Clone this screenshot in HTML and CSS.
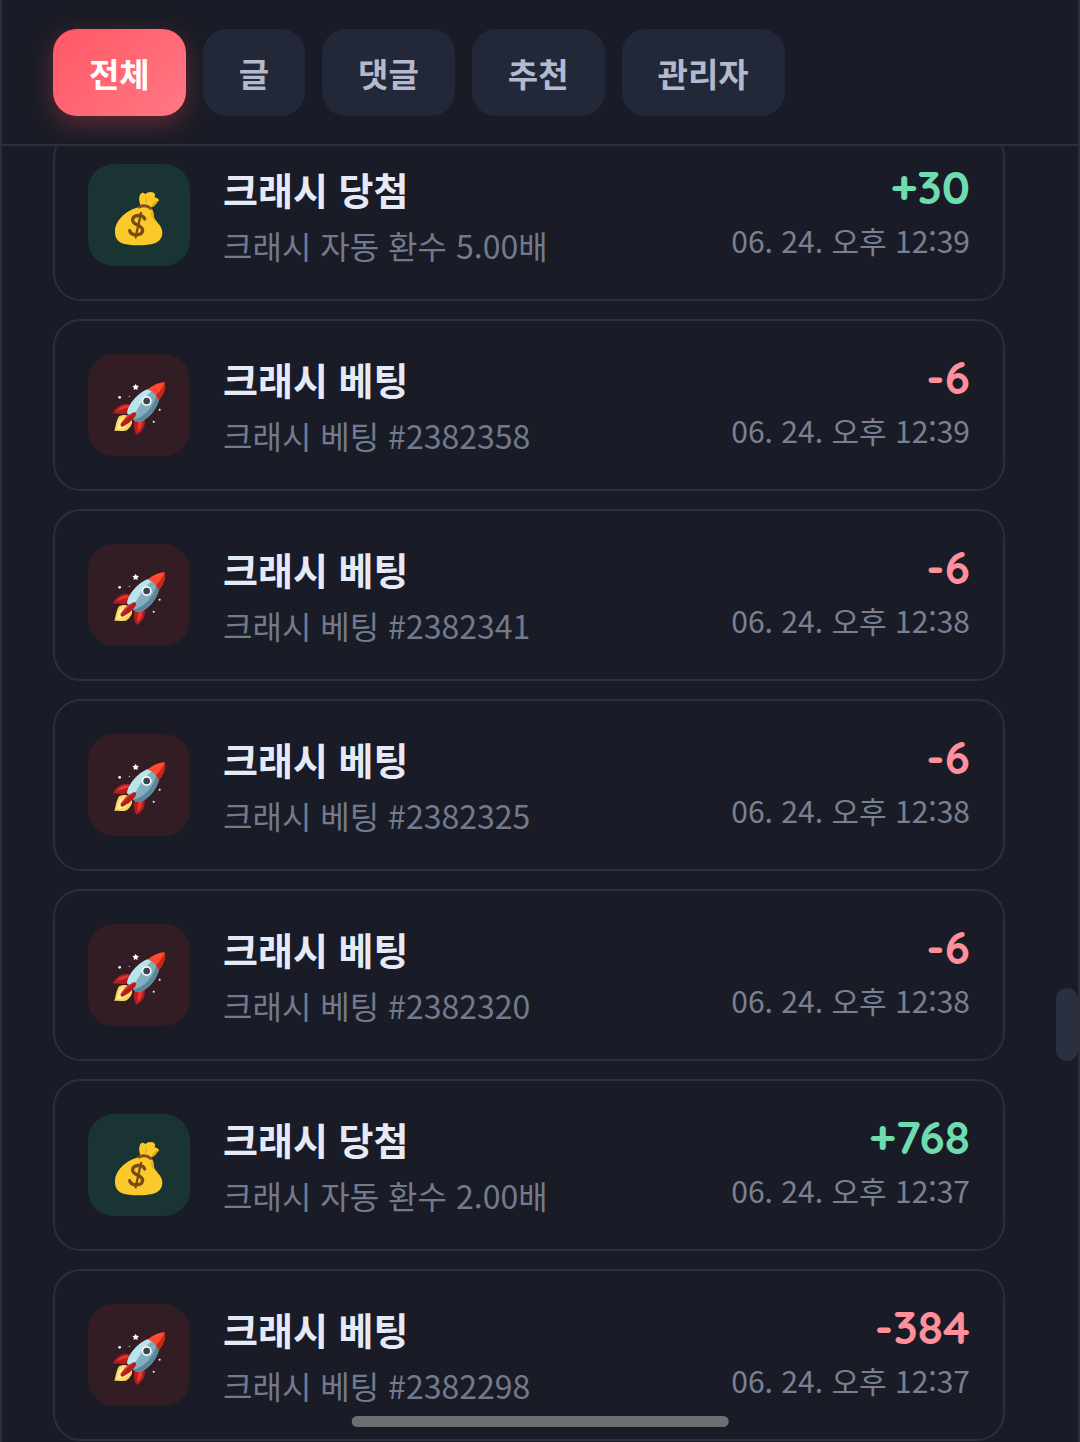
FILE: index.html
```html
<!DOCTYPE html>
<html lang="ko">
<head>
    <meta charset="UTF-8">
    <meta name="viewport" content="width=device-width, initial-scale=1.0">
    <title>포인트 내역</title>
    <link rel="stylesheet" href="styles.css">
</head>
<body>

<!-- Icons -->
<svg class="icon-defs" aria-hidden="true">
    <symbol id="icon-money" viewBox="0 0 162 162">
        <path fill="#fcc92b" d="M86 44C80 30 80 15 86 8c4-4 10-3 14 2 5-6 16-9 25-5 6 3 5 9 2 14 6 1 12 4 14 9-8 7-10 15-21 20-12 4-24 4-34-4z"/>
        <path fill="#e2a610" d="M118 43c10-6 12-17 23-15-7 7-9 17-20 20zM99 36c4-10 2-18 1-26 6 9 6 18 2 27z"/>
        <path fill="#fcc92b" d="M84 48c12-3 26-2 34 6 8 9 5 21 11 31 8 13 21 21 22 38 1 20-12 32-30 36-25 5-60 5-84 0-19-4-29-19-28-39 1-35 38-65 75-72z"/>
        <path fill="#e7ad16" d="M116 51c14 9 7 26 13 35l6 8c-13-7-21-21-17-31 2-5 2-8-2-12z"/>
        <path fill="none" stroke="#854d21" stroke-width="9" stroke-linecap="round" d="M82 48c10-5 23-5 34 4"/>
        <path fill="none" stroke="#7a4a12" stroke-width="10" stroke-linecap="round" d="M98 84C93 70 67 70 62 84c-5 18 30 17 30 34-2 18-34 17-39 1"/>
        <path fill="none" stroke="#7a4a12" stroke-width="7" stroke-linecap="round" d="M87 66L71 139"/>
    </symbol>
    <symbol id="icon-rocket" viewBox="0 0 162 168">
        <path fill="#ffd65c" d="M20 110c-7 11-9 29-13 43 14-3 29 4 39-4 12-8 20-25 10-37-9-8-24-9-36-2z"/>
        <path fill="#fff19a" d="M25 118c-6 9-8 19-11 29 12-2 22-1 30-10 8-11 5-20-2-24-5-2-12 1-17 5z"/>
        <path fill="#b71c1c" d="M54 73c-11-2-22-2-31 4C13 84 7 91 2 100l40 3z"/>
        <path fill="#e53935" d="M50 76c-15-1-27 6-36 17l36-11z"/>
        <path fill="#b71c1c" d="M98 113c1 14 1 24-5 34-5 8-12 14-20 18-6-12-9-24-7-38z"/>
        <path fill="#e53935" d="M91 121c1 14-4 27-15 36l2-32z"/>
        <path fill="#82aec0" d="M107 28c14 2 30 15 34 32-7 25-23 46-45 61-8 5-16 6-25 5L45 100c1-9 4-17 9-25 13-21 30-37 53-47z"/>
        <path fill="#b9e4ea" d="M107 28l12 6c-21 17-39 43-54 76L45 100c1-9 4-17 9-25 13-21 30-37 53-47z"/>
        <path fill="#5c8798" d="M134 45l7 15c-7 25-23 46-45 61-8 5-16 6-25 5l-7-7c31-7 57-32 70-74z"/>
        <path fill="#ff4b32" d="M107 28c16-13 33-20 51-21 5 17-4 36-17 53-7-14-18-25-34-32z"/>
        <path fill="#c62818" d="M158 7c5 17-4 36-17 53l-9-14c12-12 21-25 26-39z"/>
        <circle fill="#f5f7f8" cx="104" cy="63" r="15"/>
        <circle fill="#37474f" cx="104" cy="63" r="10"/>
        <path fill="#b71c1c" d="M69 96c5 4 4 10-1 16-10 12-22 22-36 28-6 1-8-4-5-10 9-15 23-28 42-34z"/>
        <path fill="#e53935" d="M66 98c-15 9-27 20-36 35 0-14 20-31 36-35z"/>
        <path fill="#fff" d="M71 11l3 6 7 1-5 5 1 7-6-3-6 3 1-7-5-5 7-1z"/>
        <circle fill="#fff" cx="23" cy="52" r="4"/>
        <circle fill="#ddd" cx="52" cy="49" r="2"/>
        <circle fill="#fff" cx="143" cy="89" r="3"/>
        <circle fill="#fff" cx="125" cy="125" r="3"/>
    </symbol>
</svg>

<div class="app">
    <header class="filters">
        <button class="tab active">전체</button>
        <button class="tab">글</button>
        <button class="tab">댓글</button>
        <button class="tab">추천</button>
        <button class="tab">관리자</button>
    </header>

    <main class="history">
        <div class="items">
            <div class="item">
                <div class="icon win"><svg><use href="#icon-money"/></svg></div>
                <div class="info">
                    <div class="title">크래시 당첨</div>
                    <div class="desc">크래시 자동 환수 5.00배</div>
                </div>
                <div class="result">
                    <div class="amount plus">+30</div>
                    <div class="date">06. 24. 오후 12:39</div>
                </div>
            </div>
            <div class="item">
                <div class="icon bet"><svg><use href="#icon-rocket"/></svg></div>
                <div class="info">
                    <div class="title">크래시 베팅</div>
                    <div class="desc">크래시 베팅 #2382358</div>
                </div>
                <div class="result">
                    <div class="amount minus">-6</div>
                    <div class="date">06. 24. 오후 12:39</div>
                </div>
            </div>
            <div class="item">
                <div class="icon bet"><svg><use href="#icon-rocket"/></svg></div>
                <div class="info">
                    <div class="title">크래시 베팅</div>
                    <div class="desc">크래시 베팅 #2382341</div>
                </div>
                <div class="result">
                    <div class="amount minus">-6</div>
                    <div class="date">06. 24. 오후 12:38</div>
                </div>
            </div>
            <div class="item">
                <div class="icon bet"><svg><use href="#icon-rocket"/></svg></div>
                <div class="info">
                    <div class="title">크래시 베팅</div>
                    <div class="desc">크래시 베팅 #2382325</div>
                </div>
                <div class="result">
                    <div class="amount minus">-6</div>
                    <div class="date">06. 24. 오후 12:38</div>
                </div>
            </div>
            <div class="item">
                <div class="icon bet"><svg><use href="#icon-rocket"/></svg></div>
                <div class="info">
                    <div class="title">크래시 베팅</div>
                    <div class="desc">크래시 베팅 #2382320</div>
                </div>
                <div class="result">
                    <div class="amount minus">-6</div>
                    <div class="date">06. 24. 오후 12:38</div>
                </div>
            </div>
            <div class="item">
                <div class="icon win"><svg><use href="#icon-money"/></svg></div>
                <div class="info">
                    <div class="title">크래시 당첨</div>
                    <div class="desc">크래시 자동 환수 2.00배</div>
                </div>
                <div class="result">
                    <div class="amount plus">+768</div>
                    <div class="date">06. 24. 오후 12:37</div>
                </div>
            </div>
            <div class="item">
                <div class="icon bet"><svg><use href="#icon-rocket"/></svg></div>
                <div class="info">
                    <div class="title">크래시 베팅</div>
                    <div class="desc">크래시 베팅 #2382298</div>
                </div>
                <div class="result">
                    <div class="amount minus">-384</div>
                    <div class="date">06. 24. 오후 12:37</div>
                </div>
            </div>
        </div>
        <div class="scroll-thumb"></div>
    </main>

    <div class="home-bar"></div>
</div>

</body>
</html>
```
FILE: styles.css
```css
* {
    box-sizing: border-box;
}
body {
    margin: 0;
    background-color: #191c26;
    color: #e6eaf6;
    font-family: "Noto Sans CJK KR", sans-serif;
}
.icon-defs {
    display: none;
}
.app {
    position: relative;
    display: flex;
    flex-direction: column;
    height: 100vh;
    overflow: hidden;
    border-left: 2px solid #2a2f3b;
    border-right: 2px solid #2a2f3b;
}

/* Filter tabs */
.filters {
    display: flex;
    gap: 17px;
    padding: 29px 51px 28px;
    border-bottom: 2px solid #2b303b;
}
.tab {
    padding: 19px 36px 17px;
    border: none;
    border-radius: 24px;
    background-color: #222838;
    color: #b4bace;
    font-family: inherit;
    font-size: 33px;
    font-weight: 700;
    line-height: 51px;
    cursor: pointer;
}
.tab.active {
    background: linear-gradient(135deg, #ff5864, #ff7885);
    color: white;
    box-shadow: 0 8px 24px rgba(255, 71, 87, 0.3);
}

/* History list */
.history {
    position: relative;
    flex: 1;
    min-height: 0;
    overflow: hidden;
}
.items {
    display: flex;
    flex-direction: column;
    gap: 18px;
    margin-top: -17px;
    padding: 0 73px 0 51px;
}
.item {
    display: flex;
    align-items: center;
    gap: 33px;
    padding: 33px;
    border: 2px solid #2b2f3a;
    border-radius: 28px;
}
.icon {
    display: flex;
    align-items: center;
    justify-content: center;
    width: 102px;
    height: 102px;
    padding-top: 6px;
    border-radius: 26px;
}
.icon svg {
    width: 54px;
    height: 56px;
}
.icon.win {
    background-color: #1a3433;
}
.icon.bet {
    background-color: #331d24;
}
.info {
    flex: 1;
    padding-bottom: 2px;
}
.title {
    margin-bottom: 14px;
    font-size: 38px;
    font-weight: 700;
    line-height: 49px;
}
.desc {
    color: #737a8c;
    font-size: 32px;
    line-height: 37px;
}
.result {
    padding-bottom: 6px;
    text-align: right;
}
.amount {
    margin-bottom: 10px;
    font-family: Quicksand, Lato, sans-serif;
    font-size: 46px;
    font-weight: 700;
    line-height: 46px;
}
.amount.plus {
    color: #6edcae;
}
.amount.minus {
    color: #ff8f9a;
}
.date {
    color: #7a8091;
    font-size: 30px;
    line-height: 40px;
}

/* Scroll position */
.scroll-thumb {
    position: absolute;
    top: 65%;
    right: 0;
    width: 22px;
    height: 73px;
    border-radius: 11px;
    background-color: #2a3040;
}
.home-bar {
    position: absolute;
    bottom: 15px;
    left: 50%;
    width: 35%;
    height: 11px;
    border-radius: 6px;
    background-color: #6d6e72;
    transform: translateX(-50%);
}
```
